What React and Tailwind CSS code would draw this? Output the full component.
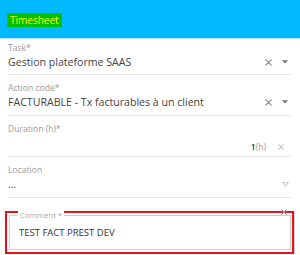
import React from "react";

const font = { fontFamily: '"Open Sans", "Noto Sans", sans-serif' };

function XIcon({ color = "#8a8a8a", size = 7 }) {
  return (
    <svg width={size} height={size} viewBox="0 0 7 7" className="block">
      <path d="M0.8 0.8 L6.2 6.2 M6.2 0.8 L0.8 6.2" stroke={color} strokeWidth="1.2" strokeLinecap="round" fill="none" />
    </svg>
  );
}

function Caret() {
  return (
    <svg width="6" height="4" viewBox="0 0 6 4" className="block">
      <polygon points="0,0.3 6,0.3 3,3.6" fill="#6f6f6f" />
    </svg>
  );
}

function HollowCaret() {
  return (
    <svg width="7" height="5" viewBox="0 0 7 5" className="block">
      <polygon points="0.6,0.6 6.4,0.6 3.5,4.2" fill="none" stroke="#bdbdbd" strokeWidth="0.9" strokeLinejoin="round" />
    </svg>
  );
}

function Field({ label, pt, pb, children }) {
  return (
    <div className={`ml-[8px] mr-[9px] border-b border-[#e6e6e6] ${pt} ${pb}`}>
      <div className="h-[9px] text-[8.6px] leading-[9px] text-[#9a9a9a] whitespace-nowrap">{label}</div>
      {children}
    </div>
  );
}

export default function App() {
  return (
    <div className="w-[300px] h-[255px] bg-white overflow-hidden" style={font}>
      <div className="h-[39px] bg-[#00b9ff] border-b border-[#b3e6fa] flex items-center pl-[7px] pt-[2px]">
        <span className="bg-[#00c000] text-[#f2ff00] text-[10px] leading-[14px] px-[3px]">Timesheet</span>
      </div>

      <Field label="Task*" pt="pt-[5px]" pb="pb-[3px]">
        <div className="h-[18px] flex items-center">
          <span className="flex-1 text-[10.6px] leading-[18px] text-[#444] whitespace-nowrap">Gestion plateforme SAAS</span>
          <span className="mr-[10px]"><XIcon /></span>
          <span className="mr-[3px]"><Caret /></span>
        </div>
      </Field>

      <Field label="Action code*" pt="pt-[9px]" pb="pb-[4px]">
        <div className="h-[18px] flex items-center">
          <span className="flex-1 text-[10.6px] leading-[18px] text-[#444] whitespace-nowrap">FACTURABLE - Tx facturables à un client</span>
          <span className="mr-[10px]"><XIcon /></span>
          <span className="mr-[3px]"><Caret /></span>
        </div>
      </Field>

      <Field label="Duration (h)*" pt="pt-[9px]" pb="pb-[4px]">
        <div className="h-[18px] flex items-center justify-end pt-[8px]">
          <span className="text-[8.6px] leading-[10px] whitespace-nowrap">
            <span className="text-[#333] font-semibold">1</span>
            <span className="text-[#999]">(h)</span>
          </span>
          <span className="ml-[12px] mr-[7px]"><XIcon color="#c4c4c4" size={6} /></span>
        </div>
      </Field>

      <Field label="Location" pt="pt-[9px]" pb="pb-[4px]">
        <div className="h-[18px] flex items-center">
          <span className="flex-1 text-[10.6px] leading-[18px] text-[#555] whitespace-nowrap">...</span>
          <span className="mr-[2px]"><HollowCaret /></span>
        </div>
      </Field>

      <div className="relative ml-[5px] mr-[6px] mt-[13px] h-[43px] border-2 border-[#e3141b] p-[2px] pr-[1px] shadow-[1px_0_0_#cfcfcf]">
        <span className="absolute right-[5px] top-[-4px]"><XIcon color="#9a9a9a" size={6} /></span>
        <div className="relative h-full border border-[#cfcfcf] pl-[9px] pt-[8px]">
          <span className="absolute left-[8px] top-[-5px] bg-white px-[2px] text-[7.8px] leading-[9px] text-[#a8a8a8] whitespace-nowrap">Comment *</span>
          <div className="text-[9.5px] leading-[18px] text-[#333] whitespace-nowrap">TEST FACT PREST DEV</div>
        </div>
      </div>
    </div>
  );
}
